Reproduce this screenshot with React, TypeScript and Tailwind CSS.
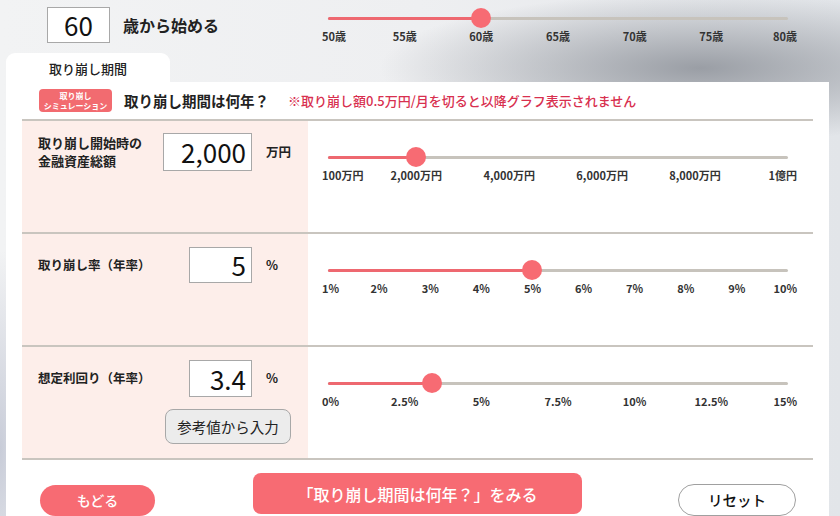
import React from "react";

const FONT = "font-['Noto_Sans_CJK_JP','Noto_Sans',sans-serif]";

type Tick = { label: string; at: number };

const TRACK = 460;

function Slider({ value, ticks }: { value: number; ticks: Tick[] }) {
  const last = ticks.length - 1;
  return (
    <div className="w-[475px]">
      <div className="relative ml-[6px] flex h-5 w-[460px] items-center">
        <div className="h-[3px] w-full rounded-full bg-[#c7c3bc]" />
        <div
          className="absolute left-0 h-[3px] rounded-full bg-[#ee6870]"
          style={{ width: value * TRACK }}
        />
        <div
          className="absolute size-5 -translate-x-1/2 rounded-full bg-[#f76b73]"
          style={{ left: value * TRACK }}
        />
      </div>
      <div className="relative mt-px h-[14px] text-[11px] font-bold leading-[14px] text-[#333]">
        {ticks.map((t, i) => {
          if (i === 0)
            return (
              <span key={t.label} className="absolute left-0 whitespace-nowrap">
                {t.label}
              </span>
            );
          if (i === last)
            return (
              <span key={t.label} className="absolute right-0 whitespace-nowrap">
                {t.label}
              </span>
            );
          return (
            <span
              key={t.label}
              className="absolute -translate-x-1/2 whitespace-nowrap"
              style={{ left: 6 + t.at * TRACK }}
            >
              {t.label}
            </span>
          );
        })}
      </div>
    </div>
  );
}

const even = (labels: string[]) =>
  labels.map((label, i) => ({ label, at: i / (labels.length - 1) }));

const AGE = even(["50歳", "55歳", "60歳", "65歳", "70歳", "75歳", "80歳"]);
const ASSET: Tick[] = [
  { label: "100万円", at: 0 },
  { label: "2,000万円", at: 1900 / 9900 },
  { label: "4,000万円", at: 3900 / 9900 },
  { label: "6,000万円", at: 5900 / 9900 },
  { label: "8,000万円", at: 7900 / 9900 },
  { label: "1億円", at: 1 },
];
const RATE = even(["1%", "2%", "3%", "4%", "5%", "6%", "7%", "8%", "9%", "10%"]);
const YIELD = even(["0%", "2.5%", "5%", "7.5%", "10%", "12.5%", "15%"]);

function NumBox({ value, w, h }: { value: string; w: string; h: string }) {
  return (
    <div
      className={`flex ${w} ${h} items-center justify-end border border-[#a8a8a8] bg-white pr-[5px] text-[26px] leading-none text-[#111]`}
    >
      {value}
    </div>
  );
}

function Row({
  children,
  slider,
}: {
  children: React.ReactNode;
  slider: React.ReactNode;
}) {
  return (
    <div className="flex h-[113px] border-b-2 border-[#c9c5bf]">
      <div className="w-[286px] bg-[#fdeeea] pl-4">{children}</div>
      <div className="pl-[14px] pt-[26px]">{slider}</div>
    </div>
  );
}

export default function App() {
  return (
    <div
      className={`${FONT} h-[516px] w-[840px] overflow-hidden bg-[radial-gradient(ellipse_320px_75px_at_700px_68px,#9a9ea5,transparent),radial-gradient(ellipse_40px_200px_at_0px_450px,#c8ccd8,transparent),linear-gradient(90deg,#f2f3f4,#eeeff1_50%,#e2e5e9)] text-[#222]`}
    >
      {/* start age */}
      <div className="flex h-[53px]">
        <div className="flex w-[322px] items-start pl-[47px] pt-[7px]">
          <div className="flex h-9 w-[63px] items-center justify-center border border-[#a8a8a8] bg-white text-[26px] leading-none text-[#111]">
            60
          </div>
          <div className="ml-[13px] flex h-9 items-center text-[16px] font-bold">
            歳から始める
          </div>
        </div>
        <div className="pt-2">
          <Slider value={1 / 3} ticks={AGE} />
        </div>
      </div>

      {/* tab */}
      <div className="ml-[6px] flex h-[29px] w-[164px] items-center justify-center rounded-t-[9px] bg-white pt-[2px] text-[13px] font-medium">
        取り崩し期間
      </div>

      {/* panel */}
      <div className="ml-[6px] w-[823px] bg-white px-4">
        <div className="flex h-[39px] items-center border-b-2 border-[#c9c5bf] pl-[17px]">
          <div className="flex h-[23px] w-[73px] flex-col items-center justify-center rounded-[4px] bg-[#f26b70] text-[8px] font-bold leading-[10px] text-white">
            <span>取り崩し</span>
            <span>シミュレーション</span>
          </div>
          <div className="ml-3 text-[14.5px] font-bold">取り崩し期間は何年？</div>
          <div className="ml-[19px] text-[13px] font-medium text-[#d8304f]">
            ※取り崩し額0.5万円/月を切ると以降グラフ表示されません
          </div>
        </div>

        <Row slider={<Slider value={1900 / 9900} ticks={ASSET} />}>
          <div className="flex items-center pt-3">
            <div className="w-[125px] text-[13px] font-bold leading-[18px]">
              取り崩し開始時の
              <br />
              金融資産総額
            </div>
            <NumBox value="2,000" w="w-[89px]" h="h-[38px]" />
            <span className="ml-[14px] text-[12.5px] font-bold">万円</span>
          </div>
        </Row>

        <Row slider={<Slider value={4 / 9} ticks={RATE} />}>
          <div className="flex items-center pt-[13px]">
            <div className="w-[151px] text-[12.5px] font-bold">取り崩し率（年率）</div>
            <NumBox value="5" w="w-[63px]" h="h-9" />
            <span className="ml-[14px] text-[12.5px] font-bold">%</span>
          </div>
        </Row>

        <Row slider={<Slider value={3.4 / 15} ticks={YIELD} />}>
          <div className="flex items-center pt-[13px]">
            <div className="w-[151px] text-[12.5px] font-bold">想定利回り（年率）</div>
            <NumBox value="3.4" w="w-[63px]" h="h-[37px]" />
            <span className="ml-[14px] text-[12.5px] font-bold">%</span>
          </div>
          <button className="ml-[127px] mt-3 flex h-[35px] w-[126px] items-center justify-center rounded-[8px] border border-[#a8a8a8] bg-[#ececec] text-[14.5px] text-[#222]">
            参考値から入力
          </button>
        </Row>

        {/* actions */}
        <div className="flex h-[60px] items-start">
          <button className="ml-[18px] mt-[25px] flex h-[31px] w-[115px] items-center justify-center rounded-full bg-[#f76b73] text-[14px] font-medium text-white">
            もどる
          </button>
          <button className="ml-[98px] mt-[13px] flex h-[41px] w-[329px] items-center justify-center rounded-[8px] bg-[#f76b73] text-[16px] font-medium text-white">
            「取り崩し期間は何年？」をみる
          </button>
          <button className="ml-[96px] mt-6 flex h-[32px] w-[118px] items-center justify-center rounded-full border-[1.5px] border-[#a0a0a0] bg-white text-[14.5px] font-medium text-[#111]">
            リセット
          </button>
        </div>
      </div>
    </div>
  );
}
